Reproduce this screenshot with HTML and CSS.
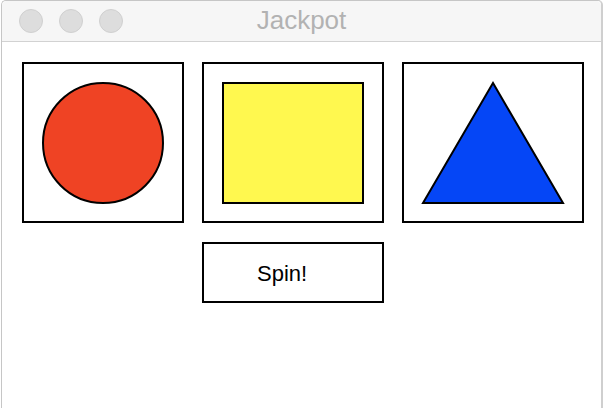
FILE: index.html
```html
<!DOCTYPE html>
<html lang="en">
<head>
    <meta charset="UTF-8">
    <meta name="viewport" content="width=device-width, initial-scale=1.0">
    <title>Jackpot</title>
    <link rel="stylesheet" href="styles.css">
</head>
<body>
    <div class="window">
        <div class="titlebar">
            <div class="lights">
                <span class="light"></span>
                <span class="light"></span>
                <span class="light"></span>
            </div>
            <div class="title">Jackpot</div>
        </div>
        <div class="content">
            <div class="slot">
                <svg width="158" height="157" viewBox="0 0 158 157">
                    <circle cx="79" cy="79" r="60" fill="#ef4324" stroke="#000" stroke-width="2"/>
                </svg>
            </div>
            <div class="slot">
                <svg width="178" height="157" viewBox="0 0 178 157">
                    <rect x="19" y="19" width="140" height="120" fill="#fff84f" stroke="#000" stroke-width="2"/>
                </svg>
            </div>
            <div class="slot">
                <svg width="178" height="157" viewBox="0 0 178 157">
                    <polygon points="19,139 89,19 159,139" fill="#0546f6" stroke="#000" stroke-width="2" stroke-linejoin="miter"/>
                </svg>
            </div>
            <button class="spin-btn" type="button">Spin!</button>
        </div>
    </div>
</body>
</html>
```

FILE: styles.css
```css
* {
    margin: 0;
    padding: 0;
    box-sizing: border-box;
}

body {
    font-family: 'Liberation Sans', Arial, sans-serif;
    background-color: white;
    height: 100vh;
    overflow: hidden;
}

.window {
    margin-left: 1px;
    width: 602px;
    height: 420px;
    border: 1px solid #c6c6c6;
    border-right: 2px solid #cfcfcf;
    border-radius: 5px 5px 0 0;
    background-color: white;
}

.titlebar {
    position: relative;
    height: 41px;
    background-color: #f6f6f6;
    border-bottom: 1px solid #d2d2d2;
    border-radius: 5px 5px 0 0;
    display: flex;
    align-items: center;
    justify-content: center;
}

.lights {
    position: absolute;
    left: 17px;
    top: 8px;
    display: flex;
    gap: 16px;
}

.light {
    width: 24px;
    height: 24px;
    border-radius: 50%;
    background-color: #dddddd;
    border: 1px solid #d0d0d0;
}

.title {
    font-family: 'Liberation Sans', Arial, sans-serif;
    font-size: 26px;
    color: #b2b2b2;
    margin-top: -1px;
}

.content {
    display: grid;
    grid-template-columns: 162px 182px 182px;
    column-gap: 18px;
    row-gap: 19px;
    padding: 20px 0 0 20px;
}

.slot {
    height: 161px;
    border: 2px solid black;
    display: flex;
}

.slot svg {
    display: block;
}

.spin-btn {
    grid-column: 2;
    height: 61px;
    border: 2px solid black;
    background-color: white;
    font-family: 'Liberation Sans', Arial, sans-serif;
    font-size: 22px;
    color: black;
    text-align: left;
    padding-left: 53px;
    padding-top: 2px;
}
```
